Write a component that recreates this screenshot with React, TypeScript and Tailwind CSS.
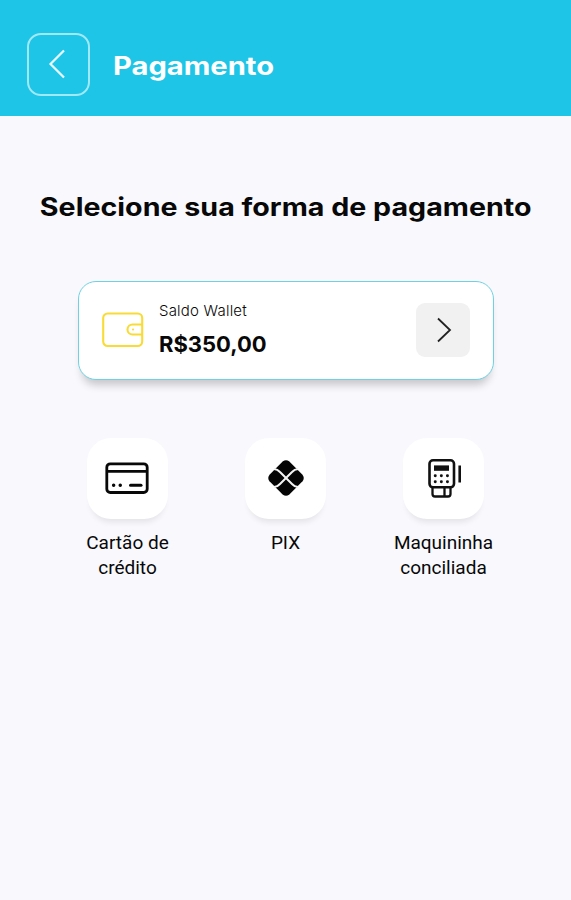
import type { ReactNode } from "react";

function CardIcon() {
  return (
    <svg className="mr-0.5" width="44" height="32" viewBox="0 0 44 32" fill="none" stroke="#080808" strokeWidth="2.8">
      <rect x="1.8" y="1.8" width="40.4" height="28.7" rx="3.5" />
      <path d="M2 9.3h40" />
      <path d="M25.5 23.3h10.5" strokeWidth="3" strokeLinecap="round" />
      <path d="M8.6 23.3h.1M15.2 23.3h.1" strokeWidth="3.4" strokeLinecap="round" />
    </svg>
  );
}

function PixIcon() {
  return (
    <svg width="36" height="36" viewBox="0 0 36 36" fill="none">
      <path
        d="M14.9 1.3Q18-1 21.1 1.3L34.5 14.7Q37 18 34.500 21.300L21.100 34.700Q18 37 14.900 34.700L1.500 21.300Q-1 18 1.500 14.700Z"
        fill="#050505"
      />
      <path
        d="M6 9Q9.5 9.2 12 12L24 24Q26.5 26.800 30 27M30 9Q26.500 9.200 24 12L12 24Q9.500 26.800 6 27"
        stroke="#f4f4f4"
        strokeWidth="2"
      />
    </svg>
  );
}

function TerminalIcon() {
  return (
    <svg className="ml-[3px]" width="34" height="40" viewBox="0 0 34 40" fill="none" stroke="#111" strokeWidth="2.6">
      <rect x="1.5" y="2.3" width="24.5" height="27" rx="3.5" />
      <path d="M6 7.4h15v5.4H6z" fill="#111" stroke="none" />
      <path d="M7.2 17.7h.1M13.3 17.7h.1M19.4 17.7h.1M7.2 23.7h.1M13.3 23.7h.1M19.4 23.7h.1" strokeWidth="2.9" strokeLinecap="round" />
      <path d="M4.5 30v6q0 2.5 2.5 2.5h13q2.5 0 2.5-2.5V30M16.5 30v8" strokeWidth="2.3" />
      <path d="M31.7 7.5v17" />
    </svg>
  );
}

type Method = { label: string; icon: ReactNode };

const methods: Method[] = [
  { label: "Cartão de crédito", icon: <CardIcon /> },
  { label: "PIX", icon: <PixIcon /> },
  { label: "Maquininha conciliada", icon: <TerminalIcon /> },
];

export default function App() {
  return (
    <div className="flex h-[900px] w-[571px] flex-col overflow-hidden bg-[#f8f8fd] font-['Inter',sans-serif] text-[#080808]">
      {/* Header */}
      <header className="flex h-[115.5px] shrink-0 items-center gap-[23px] bg-[#1fc5e6] pt-[13px] pl-[27px]">
        <button className="flex size-[63px] items-center justify-center rounded-[14px] border-2 border-[#a0e9f7] pr-1">
          <svg width="18" height="30" viewBox="0 0 18 30" fill="none" stroke="#e9fcff" strokeWidth="2.2">
            <path d="M16 1.5 2.5 15 16 28.5" />
          </svg>
        </button>
        <h1 className="origin-left scale-x-[1.165] pt-[3px] text-[25px] leading-[38px] font-bold text-white">Pagamento</h1>
      </header>

      <main className="flex flex-col items-center">
        <h2 className="mt-[72px] scale-x-[1.145] text-[25px] leading-[38px] font-bold whitespace-nowrap">
          Selecione sua forma de pagamento
        </h2>

        {/* Wallet balance */}
        <button className="mt-[55px] ml-px flex h-[99px] w-[416px] items-center rounded-[18px] border-[1.5px] border-[#6fd2e3] bg-white px-[23px] text-left shadow-[0_9px_8px_-4px_rgba(0,0,0,0.2)]">
          <svg width="42" height="36" viewBox="0 0 42 36" fill="none" stroke="#f8dc35" strokeWidth="2.1">
            <rect x="1.2" y="1.5" width="39" height="32.5" rx="4.5" />
            <path d="M40 12.5H30.5a5 5 0 0 0 0 10H40" />
            <path d="M31 17.5h.1" strokeLinecap="round" />
          </svg>
          <span className="ml-[15px] flex flex-1 flex-col pb-0.5">
            <span className="text-[15px] leading-5 font-light tracking-[0.2px]">Saldo Wallet</span>
            <span className="mt-[9px] text-[22px] leading-7 font-bold">R$350,00</span>
          </span>
          <span className="flex size-[54px] items-center justify-center rounded-[9px] bg-[#f1f1f2]">
            <svg className="ml-0.5" width="16" height="26" viewBox="0 0 16 26" fill="none" stroke="#222" strokeWidth="1.8">
              <path d="m2 1.5 12 11.5L2 24.5" />
            </svg>
          </span>
        </button>

        {/* Payment methods */}
        <div className="mt-[58px] grid grid-cols-[158px_158px_158px]">
          {methods.map((method) => (
            <div key={method.label} className="flex flex-col items-center">
              <div className="flex size-[81px] items-center justify-center rounded-[24px] bg-white shadow-[0_7px_6px_-4px_rgba(0,0,0,0.09)]">
                {method.icon}
              </div>
              <span className="mt-[11px] w-[110px] text-center font-['Roboto',sans-serif] text-[19px] leading-[25px]">
                {method.label}
              </span>
            </div>
          ))}
        </div>
      </main>
    </div>
  );
}
